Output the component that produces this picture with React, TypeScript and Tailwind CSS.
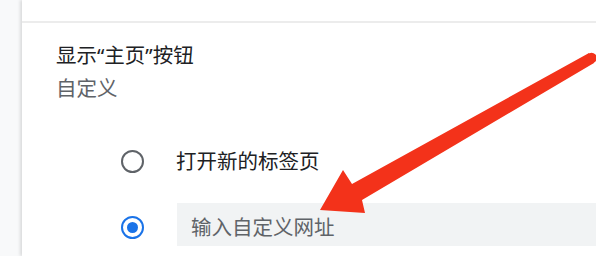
const font = { fontFamily: '"Noto Sans", "Noto Sans CJK SC", sans-serif' };

const Radio = ({ checked }: { checked?: boolean }) =>
  checked ? (
    <div className="w-[23px] h-[23px] rounded-full border-[2.5px] border-[#1a73e8] flex items-center justify-center">
      <div className="w-[11px] h-[11px] rounded-full bg-[#1a73e8]" />
    </div>
  ) : (
    <div className="w-[23px] h-[23px] rounded-full border-[2.5px] border-[#5f6368]" />
  );

export default function App() {
  return (
    <div className="relative w-[596px] h-[256px] flex overflow-hidden bg-white" style={font}>
      <div className="w-[22px] bg-[#f8f9fa]" />
      <div className="flex-1 bg-white shadow-[-2px_0_3px_rgba(0,0,0,0.12)]">
        <div className="h-[23px] border-b-2 border-[#ececec]" />
        <div className="pl-[34px] pt-[16px]">
          <div className="text-[20.5px] leading-[33px] text-[#202124]">显示“主页”按钮</div>
          <div className="text-[20.5px] leading-[33px] text-[#5f6368]">自定义</div>
        </div>
        <div className="mt-[39px] flex items-center h-[34px]">
          <div className="ml-[99px] w-[23px] flex justify-center">
            <Radio />
          </div>
          <span className="ml-[32px] text-[20.5px] text-[#202124]">打开新的标签页</span>
        </div>
        <div className="mt-[25px] flex items-center">
          <div className="ml-[99px] w-[23px] mt-[5px]">
            <Radio checked />
          </div>
          <div className="ml-[33px] flex-1 h-[43px] bg-[#f1f3f4] flex items-center pl-[14px] pt-[6px] text-[20.5px] text-[#5f6368]">
            输入自定义网址
          </div>
        </div>
      </div>
      <svg className="absolute inset-0 pointer-events-none" width="596" height="256" viewBox="0 0 596 256">
        <polygon
          points="320,210 343,170 352,184 589,53 594,63 362,200 365,213"
          fill="#f3321a"
          strokeLinejoin="round"
        />
        <circle cx="591.5" cy="58" r="5.3" fill="#f3321a" />
      </svg>
    </div>
  );
}
